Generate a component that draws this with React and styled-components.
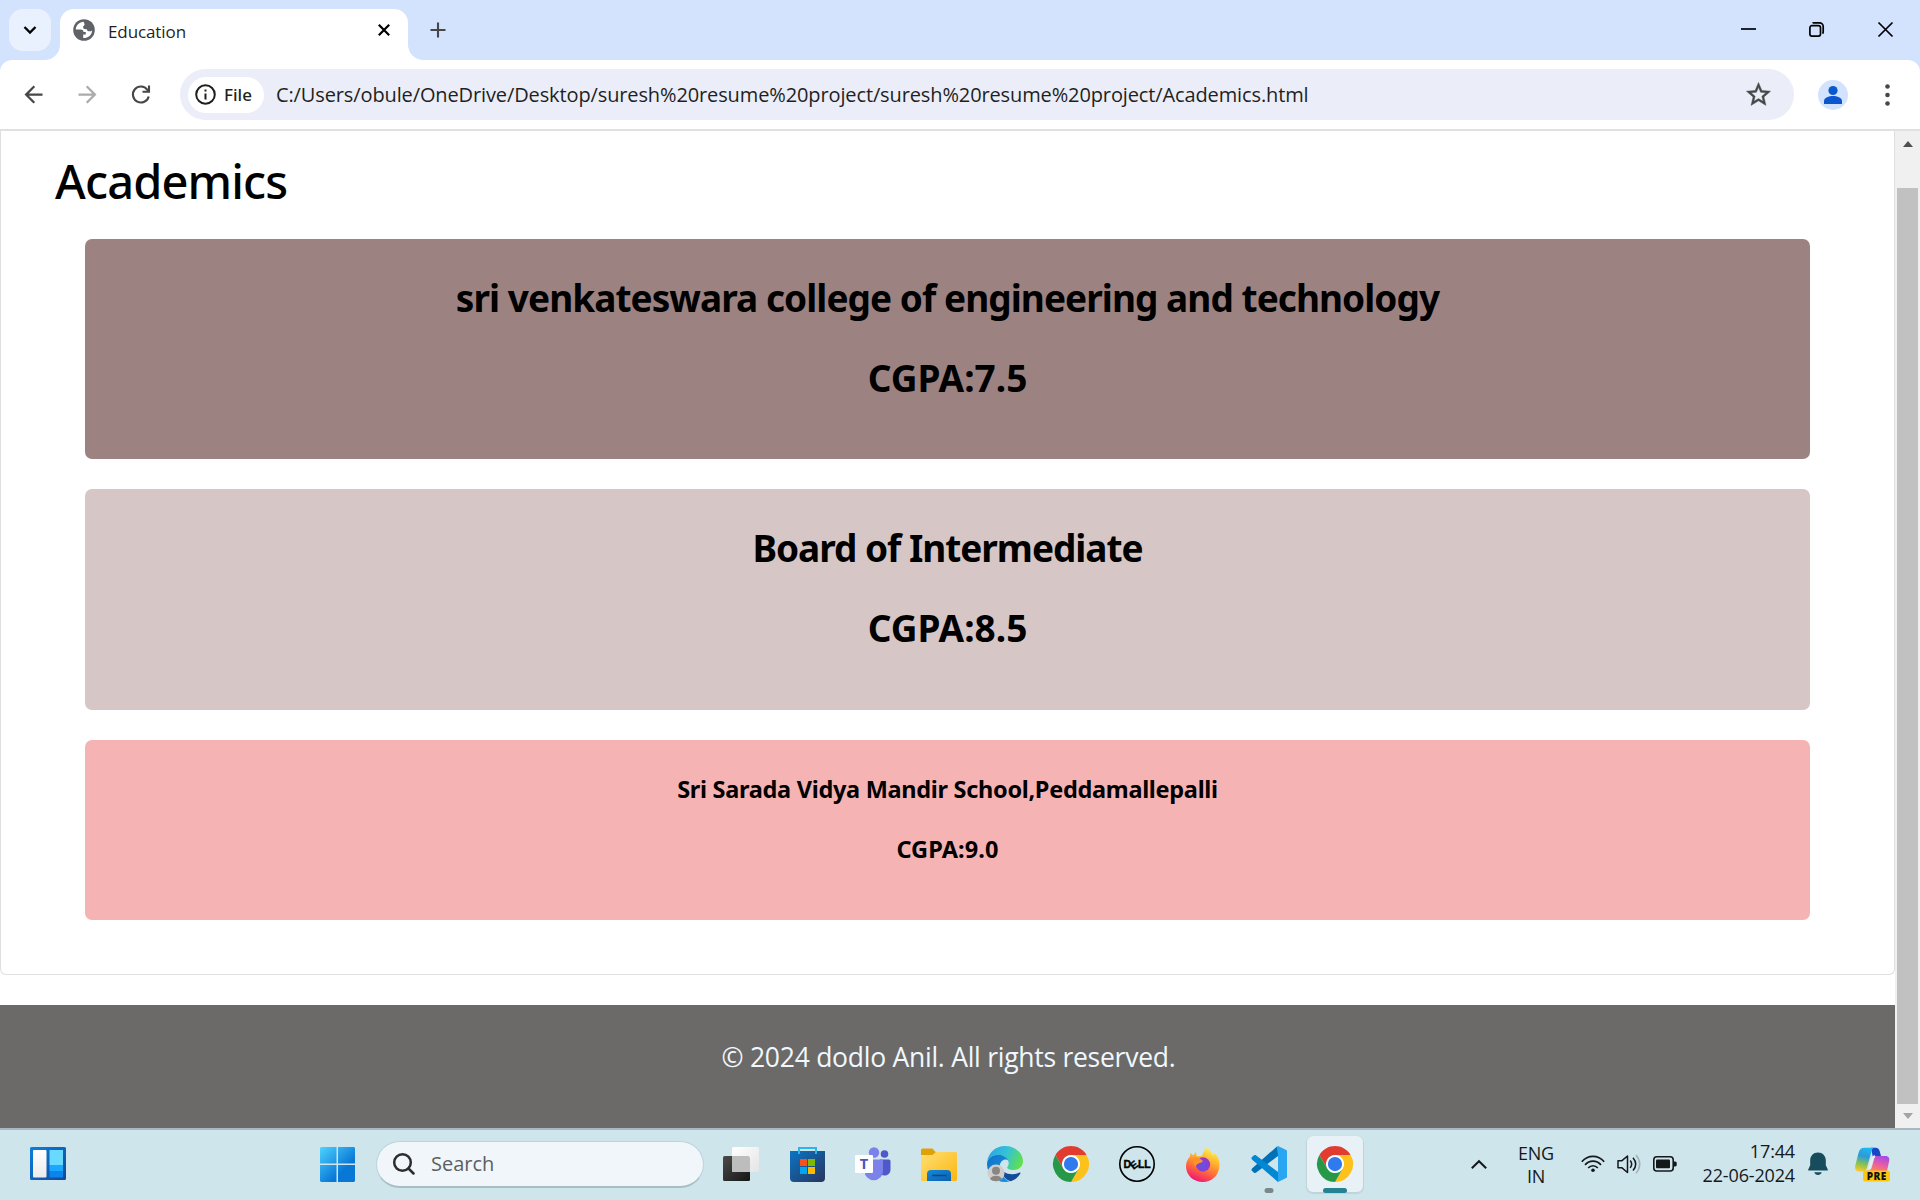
import React from 'react';
import styled, { createGlobalStyle } from 'styled-components';

const GlobalStyle = createGlobalStyle`
  * { box-sizing: border-box; }
  body { margin: 0; overflow: hidden; font-family: "Open Sans", "Noto Sans", sans-serif; color: #1f1f1f; }
  svg { display: block; flex: none; overflow: visible; }
`;

const Screen = styled.div`
  width: 1920px;
  height: 1200px;
  display: flex;
  flex-direction: column;
  background: #fff;
`;

/* ---------- browser chrome ---------- */

const TabStrip = styled.header`
  height: 60px;
  flex: none;
  display: flex;
  align-items: flex-start;
  padding: 9px 19px 0 9px;
  background: #d3e3fd;
`;

const TabSearch = styled.button`
  width: 42px;
  height: 42px;
  padding: 0;
  border: 0;
  border-radius: 14px;
  background: #e9f1fe;
  display: grid;
  place-items: center;
`;

const Tab = styled.div`
  position: relative;
  width: 348px;
  height: 51px;
  margin-left: 9px;
  padding: 0 14px 9px 13px;
  border-radius: 14px 14px 0 0;
  background: #fff;
  display: flex;
  align-items: center;

  &::before,
  &::after {
    content: '';
    position: absolute;
    bottom: 0;
    width: 15px;
    height: 15px;
  }
  &::before {
    left: -15px;
    background: radial-gradient(circle at 0 0, transparent 14.5px, #fff 15.2px);
  }
  &::after {
    right: -15px;
    background: radial-gradient(circle at 100% 0, transparent 14.5px, #fff 15.2px);
  }
`;

const TabTitle = styled.span`
  flex: 1;
  margin-left: 13px;
  padding-top: 3px;
  font-size: 17px;
  line-height: 24px;
  letter-spacing: -0.1px;
`;

const PlainButton = styled.button`
  width: ${(p) => p.$w || 42}px;
  height: 42px;
  padding: 0;
  border: 0;
  background: none;
  flex: none;
  display: grid;
  place-items: center;
`;

const NewTab = styled(PlainButton)`
  margin-left: 9px;
`;

const WindowControls = styled.div`
  display: flex;
  gap: 53px;
  margin-left: auto;
  margin-right: 8px;
  padding-top: 13px;

  svg:last-child {
    margin-left: 1px;
  }
`;

const ToolbarBack = styled.div`
  flex: none;
  background: #d3e3fd;
`;

const Toolbar = styled.div`
  height: 71px;
  border-radius: 12px 12px 0 0;
  border-bottom: 2px solid #dfe0e1;
  background: #fff;
  display: flex;
  align-items: center;
  padding: 0 3px 0 6px;
`;

const NavButton = styled(PlainButton)`
  width: 54px;
  color: ${(p) => (p.$off ? '#ababab' : '#474747')};
`;

const Omnibox = styled.div`
  width: 1614px;
  height: 51px;
  flex: none;
  margin-left: 12px;
  padding: 0 21px 0 8px;
  border-radius: 26px;
  background: #ebeef8;
  display: flex;
  align-items: center;
`;

const FileChip = styled.div`
  width: 76px;
  height: 36px;
  padding-left: 7px;
  border-radius: 18px;
  background: #fff;
  display: flex;
  align-items: center;
  gap: 8px;
  font: 500 17px/24px "Noto Sans", sans-serif;
`;

const Address = styled.span`
  flex: 1;
  margin-left: 12px;
  font-size: 20px;
  line-height: 28px;
  letter-spacing: -0.12px;
  white-space: nowrap;
`;

const Avatar = styled.div`
  width: 30px;
  height: 30px;
  flex: none;
  margin: 0 9px 0 24px;
  border-radius: 50%;
  background: #d3e3fd;
`;

/* ---------- page ---------- */

const Viewport = styled.div`
  height: 997px;
  flex: none;
  display: flex;
  overflow: hidden;
`;

const Page = styled.main`
  width: 1895px;
  color: #000;
`;

const Section = styled.section`
  height: 844px;
  padding: 20px 84px 0;
  border: solid #dedfe0;
  border-width: 0 1px 1px;
  border-radius: 0 0 6px 6px;
`;

const PageTitle = styled.h1`
  margin: 0 0 28px -30px;
  font: 500 47px/60px "Noto Sans", sans-serif;
  letter-spacing: -0.85px;
`;

const Card = styled.article`
  height: ${(p) => p.$height}px;
  margin-bottom: 30px;
  padding-top: 31px;
  border-radius: 7px;
  background: ${(p) => p.$color};
  text-align: center;
`;

const CardHeading = styled.h2`
  margin: 0 0 24px;
  font: 700 37px/56px "Noto Sans", sans-serif;
  letter-spacing: ${(p) => p.$tracking}px;
`;

const CardSubheading = styled.h4`
  margin: 0 0 24px;
  font: 700 23.5px/36px "Noto Sans", sans-serif;
  letter-spacing: ${(p) => p.$tracking}px;
`;

const Footer = styled.footer`
  height: 123px;
  margin-top: 30px;
  padding: 32px 0 0 2px;
  background: #6b6a68;
  color: #f0f8ff;
  text-align: center;
  font-size: 26.5px;
  line-height: 40px;
  letter-spacing: -0.26px;
`;

const Scrollbar = styled.div`
  width: 25px;
  padding: 10px 2px 9px;
  background: #f0f0f0;
  display: flex;
  flex-direction: column;
  align-items: center;
`;

const Thumb = styled.div`
  width: 21px;
  height: 916px;
  margin: 41px 0 9px;
  background: #c1c1c1;
`;

const Arrow = styled.div`
  border: 5.5px solid transparent;
  border-${(p) => (p.$up ? 'bottom' : 'top')}: 6px solid ${(p) => (p.$up ? '#505050' : '#a3a3a3')};
  border-${(p) => (p.$up ? 'top' : 'bottom')}: 0;
`;

/* ---------- taskbar ---------- */

const Taskbar = styled.footer`
  height: 72px;
  flex: none;
  padding: 0 30px;
  border-top: 2px solid #a9b8c0;
  background: #cfe5ec;
  display: flex;
  align-items: center;
`;

const StartArea = styled.div`
  width: 346px;
  display: flex;
  align-items: flex-start;
  justify-content: space-between;
  margin-bottom: 1px;
  padding-right: 21px;
`;

const SearchBox = styled.div`
  width: 328px;
  height: 47px;
  margin: 0 4px 1px 0;
  padding-left: 16px;
  border: 1px solid #bdd3db;
  border-bottom: 2px solid #a9bdc5;
  border-radius: 24px;
  background: #f0f6f9;
  display: flex;
  align-items: center;
  gap: 16px;
  font-size: 20px;
  line-height: 28px;
  color: #5c6062;
`;

const AppCell = styled.div`
  width: 66px;
  height: 68px;
  margin-bottom: 2px;
  display: grid;
  place-items: center;
`;

const AppTile = styled.div`
  position: relative;
  width: 56px;
  height: 56px;
  border-radius: 6px;
  display: grid;
  place-items: center;
  background: ${(p) => (p.$active ? '#e7f1f6' : 'none')};
  box-shadow: ${(p) => (p.$active ? '0 1px 1px 1px #bfd3da' : 'none')};
`;

const Indicator = styled.span`
  position: absolute;
  bottom: -1px;
  left: 50%;
  width: ${(p) => (p.$active ? 24 : 9)}px;
  height: 5px;
  border-radius: 3px;
  transform: translateX(-50%);
  background: ${(p) => (p.$active ? '#258291' : '#7c878b')};
`;

const Tray = styled.div`
  margin-left: auto;
  display: flex;
  align-items: center;
  color: #15181a;
`;

const Chevron = styled.div`
  margin-bottom: 2px;
`;

const Language = styled.div`
  width: 54px;
  margin: 0 0 1px 22px;
  font-size: 18px;
  line-height: 23px;
  letter-spacing: -0.2px;
  text-align: center;
`;

const Status = styled.div`
  display: flex;
  align-items: center;
  gap: 12px;
  margin: 0 0 2px ${(p) => p.$before || 18}px;
`;

const Clock = styled.div`
  width: 118px;
  margin-bottom: 4px;
  font-size: 18px;
  line-height: 24px;
  letter-spacing: -0.15px;
  text-align: right;
`;

/* ---------- icons ---------- */

const Stroke = ({ w, h, sw, children, color = 'currentColor', cap = 'butt' }) => (
  <svg width={w} height={h} viewBox={`0 0 ${w} ${h}`} fill="none" stroke={color} strokeWidth={sw} strokeLinecap={cap}>
    {children}
  </svg>
);

const GlobeIcon = () => (
  <svg width="22" height="22" viewBox="0 0 22 22">
    <circle cx="11" cy="11" r="10.8" fill="#5f6368" />
    <path d="M10.8 2.7C6 2.8 3.1 6.4 2.8 10.4h5.1c1.7 0 2.6 1 2.6 2.5h2.3v2.6h-2.6v3.6c5 .2 8.8-3.4 8.9-7.7-1 .9-2 1-3.6.8-1.3-.2-1.7-1-1.8-2.1-2 .2-3.5-.2-3.6-1.9-.1-1.6 1.6-1.6 1.5-3 0-.9-.8-1-.8-2.5z" fill="#fff" />
  </svg>
);

const ChromeIcon = () => (
  <svg width="36" height="36" viewBox="0 0 48 48">
    <circle cx="24" cy="24" r="12.5" fill="#fff" />
    <path d="M24 12h20.780a24 24 0 0 0-41.564.003L13.608 30l.009-.002A11.985 11.985 0 0 1 24 12z" fill="#e23c30" />
    <path d="M34.391 30.003 24 48A23.994 23.994 0 0 0 44.780 12.003H24l-.003.009a11.985 11.985 0 0 1 10.394 17.991z" fill="#fcc21b" />
    <path d="M13.609 30.003 3.218 12.006A23.994 23.994 0 0 0 24.002 48l10.391-17.997-.007-.007a11.985 11.985 0 0 1-20.777.007z" fill="#279847" />
    <circle cx="24" cy="24" r="9.5" fill="#2f7bed" />
  </svg>
);

const WidgetsIcon = () => (
  <svg width="36" height="33" viewBox="0 0 36 33">
    <defs>
      <linearGradient id="wBack" x1="0" y1="0" x2="1" y2="1"><stop stopColor="#0d7fdc" /><stop offset="1" stopColor="#11489a" /></linearGradient>
      <linearGradient id="wPane" x1="0" y1="0" x2="0" y2="1"><stop stopColor="#fff" /><stop offset="1" stopColor="#ebebeb" /></linearGradient>
    </defs>
    <rect width="36" height="33" rx="1.5" fill="url(#wBack)" />
    <rect x="3" y="3" width="13.5" height="27.5" rx="1" fill="url(#wPane)" />
    <path d="M19.5 3H33v15H19.500z" fill="#68d9ff" />
    <path d="M19.5 18H33v6H19.500z" fill="#1ca7ff" />
    <path d="M19.5 24H33v6.500H19.500z" fill="#0b84ec" />
  </svg>
);

const StartIcon = () => (
  <svg width="35" height="35" viewBox="0 0 35 35">
    <defs>
      <linearGradient id="start" gradientUnits="userSpaceOnUse" x1="0" y1="0" x2="30" y2="32"><stop stopColor="#4fd2ff" /><stop offset=".75" stopColor="#0878d6" /></linearGradient>
    </defs>
    <path d="M1 0h15.500v16.500H0V1zM18 0h16l1 1v15.500H18zM0 18h16.500v17H1l-1-1zM18 18h17v16l-1 1H18z" fill="url(#start)" />
  </svg>
);

const TaskViewIcon = () => (
  <svg width="36" height="34" viewBox="0 0 36 34">
    <defs>
      <linearGradient id="tvDark" x1="0" y1="0" x2="1" y2="1"><stop stopColor="#4b4b4b" /><stop offset="1" stopColor="#151515" /></linearGradient>
      <linearGradient id="tvLight" x1="0" y1="0" x2="1" y2="1"><stop stopColor="#fff" /><stop offset="1" stopColor="#e4e4e4" /></linearGradient>
    </defs>
    <rect y="9" width="27" height="25" rx="1.5" fill="url(#tvDark)" />
    <rect x="9" width="27" height="25" rx="1.5" fill="url(#tvLight)" />
    <path d="M9 9h16.500L27 10.500V25H10.500L9 23.500z" fill="#bdbdbd" />
  </svg>
);

const StoreIcon = () => (
  <svg width="35" height="35" viewBox="0 0 35 35">
    <defs>
      <linearGradient id="store" x1="0" y1="0" x2="1" y2="1"><stop stopColor="#0b74c6" /><stop offset="1" stopColor="#27355c" /></linearGradient>
    </defs>
    <path d="M0 4h35v27a4 4 0 0 1-4 4H4a4 4 0 0 1-4-4z" fill="url(#store)" />
    <path d="M9 7V1h17v6" fill="none" stroke="#27b7ee" strokeWidth="2" />
    <path d="M10 12h7v7h-7z" fill="#f4511f" />
    <path d="M18 12h7v7h-7z" fill="#80b900" />
    <path d="M10 20h7v7h-7z" fill="#05a4ee" />
    <path d="M18 20h7v7h-7z" fill="#fdb902" />
  </svg>
);

const TeamsIcon = () => (
  <svg width="36" height="34" viewBox="0 0 36 34">
    <circle cx="29.5" cy="7" r="3.8" fill="#5059c9" />
    <path d="M25 12.500h9a1.500 1.500 0 0 1 1.500 1.500v8.500a6 6 0 0 1-10.500 4z" fill="#5059c9" />
    <circle cx="19" cy="5.5" r="5.2" fill="#7b83eb" />
    <path d="M9.500 12.500h17a1.500 1.500 0 0 1 1.500 1.500v10a9.200 9.200 0 0 1-18.500 0z" fill="#7b83eb" />
    <rect y="8" width="18" height="18" rx="1" fill="#fff" />
    <text x="9" y="21.8" fontFamily="Open Sans" fontWeight="700" fontSize="14.5" textAnchor="middle" fill="#4b53bc">T</text>
  </svg>
);

const ExplorerIcon = () => (
  <svg width="36" height="33" viewBox="0 0 36 33">
    <defs>
      <linearGradient id="folder" x1="0" y1="0" x2="1" y2="1"><stop stopColor="#ffdf76" /><stop offset="1" stopColor="#fbb70e" /></linearGradient>
      <linearGradient id="folderBlue" x1="0" y1="0" x2="1" y2="1"><stop stopColor="#1589dc" /><stop offset="1" stopColor="#0c60ad" /></linearGradient>
    </defs>
    <path d="M0 1.500 1.500.5h10L14.500 4H20v6H0z" fill="#e0a106" />
    <path d="M0 7h11.500L15 4h20l1 1v27l-1 1H1l-1-1z" fill="url(#folder)" />
    <path d="M6 33v-7a4 4 0 0 1 4-4h16a4 4 0 0 1 4 4v7z" fill="url(#folderBlue)" />
    <path d="M11 27.500h14.500" stroke="#0b4a86" strokeWidth="1.5" />
  </svg>
);

const EdgeIcon = () => (
  <svg width="36" height="36" viewBox="0 0 36 36">
    <defs>
      <linearGradient id="eTop" x1="0" y1=".3" x2="1" y2=".6"><stop stopColor="#2aa5e6" /><stop offset=".5" stopColor="#33c3d6" /><stop offset="1" stopColor="#63e04a" /></linearGradient>
      <linearGradient id="eMid" x1="0" y1="0" x2="1" y2="1"><stop stopColor="#1174c9" /><stop offset="1" stopColor="#1993dd" /></linearGradient>
    </defs>
    <path d="M.2 16C1.200 6.500 8.800 0 18 0c10.500 0 18 7.300 18 15.300 0 5.200-4 8.700-9.300 8.700-4.200 0-6.500-1.300-6.500-2.500 0-.9 1.500-1.600 1.500-4.300C21.700 12.800 17 8.800 11.300 8.800 5.700 8.800 1.500 12 .2 16z" fill="url(#eTop)" />
    <path d="M0 18c0-5 5-9.200 11.300-9.200 4.500 0 8.600 2.500 9.900 5.600-1.200-.9-3-1.100-4.700-.4-3 1.300-4.200 4.500-3.800 8C13.400 28 17 33 22.500 35.400 20 36 18 36 18 36 8 36 0 28 0 18z" fill="url(#eMid)" />
    <path d="M13 19.500c-.6 7.500 5.500 14.500 10.500 15.700C28 33.700 31.700 30.700 33.500 27.300c.3-.8-.4-1.100-1-.8-8 4-18 1-19.500-7z" fill="#114d99" />
    <circle cx="9" cy="27" r="8.5" fill="#d1cdca" />
    <circle cx="9" cy="24.8" r="4" fill="#8a8683" />
    <path d="M3 33c1.500-4.500 10.500-4.500 12 0-3 3-9 3-12 0z" fill="#8a8683" />
  </svg>
);

const DellIcon = () => (
  <svg width="36" height="36" viewBox="0 0 36 36">
    <circle cx="18" cy="18" r="17.2" fill="none" stroke="#000" strokeWidth="1.6" />
    <g fontFamily="Liberation Sans" fontWeight="700" fontSize="10.5" stroke="#000" strokeWidth=".4">
      <text x="4.6" y="21.8">D</text>
      <text x="11.4" y="22.6" transform="rotate(-38 14.9 18.8)">E</text>
      <text x="19" y="21.8">L</text>
      <text x="25.2" y="21.8">L</text>
    </g>
  </svg>
);

const FirefoxIcon = () => (
  <svg width="34" height="35" viewBox="0 0 34 35">
    <defs>
      <linearGradient id="ff" x1=".75" y1=".05" x2=".35" y2="1"><stop stopColor="#fff04a" /><stop offset=".35" stopColor="#ffb02e" /><stop offset=".65" stopColor="#ff6a3a" /><stop offset="1" stopColor="#ee1579" /></linearGradient>
      <radialGradient id="ffCore" cx=".45" cy=".6" r=".6"><stop stopColor="#6155e0" /><stop offset="1" stopColor="#9a35cf" /></radialGradient>
    </defs>
    <path d="M22 0c.5 3.600 3.500 5 5.500 9 .7-.8.7-2.500.5-3.500 4.300 3.500 5.600 8.500 5.500 13C33.300 28 26 35 17 35 7.500 35 .2 28.500 0 19.500c0-5 2-8 4-10l.5-3.500 2.700 2.400L10 4.800l.5 4.500L16 9c1-4.500 4-8 6-9z" fill="url(#ff)" />
    <circle cx="17" cy="17.5" r="7.2" fill="url(#ffCore)" />
    <path d="M8.500 10.500c3-1 5 .5 8.500 3.500-1 1.700-3.300 1.900-4.500 2.400-1.800.8-2.900 2-2.700 3.600C7 16.500 6.500 13 8.500 10.500z" fill="#ff942b" />
  </svg>
);

const VsCodeIcon = () => (
  <svg width="36" height="36" viewBox="0 0 36 36">
    <path d="M26.500 0 1.300 22.300c-1 .9-1 1.900-.2 2.700l1.600 1.500c.9.7 1.700.7 2.500.1L27 10z" fill="#0070b7" />
    <path d="M1.200 13.700c-1-.9-1-1.900-.2-2.700l1.700-1.500c.8-.7 1.700-.7 2.500-.1L27 26v10z" fill="#0288d2" />
    <path d="m27 0 8.200 3.900c.5.3.8.7.8 1.300v25.600c0 .6-.3 1-.8 1.300L27 36z" fill="#29a6f1" />
  </svg>
);

const WifiIcon = () => (
  <Stroke w={24} h={18} sw={1.7}>
    <path d="M.8 6.700C7-.4 17-.4 23.200 6.700M4 9.900c4.500-5 11.500-5 16 0M7.200 13c2.700-3 6.900-3 9.600 0" />
    <circle cx="12" cy="15.3" r="1.8" fill="currentColor" stroke="none" />
  </Stroke>
);

const SpeakerIcon = () => (
  <Stroke w={24} h={20} sw={1.5}>
    <path d="M1 6.800h3.700L10.500 2v16.500l-5.800-4.800H1z" strokeLinejoin="round" />
    <path d="M13.200 6.500q3 3.700 0 7.400M16 3.800q5.500 6.400 0 12.800" />
    <path d="M19 1q7.500 9.200 0 18.400" opacity=".25" />
  </Stroke>
);

const BatteryIcon = () => (
  <Stroke w={24} h={16} sw={1.6}>
    <rect x=".8" y=".8" width="19.4" height="14.2" rx="3" />
    <rect x="3" y="3.5" width="14" height="8.8" rx="1" fill="currentColor" stroke="none" />
    <path d="M20 5.500h2.500l1.200 1v3l-1.200 1H20z" fill="currentColor" stroke="none" />
  </Stroke>
);

const BellIcon = () => (
  <svg width="20" height="24" viewBox="0 0 20 24">
    <path d="M10 .5c-4.600 0-7.800 3.500-7.800 7.800v5L.2 17.400c-.2.7.1 1.200.8 1.200h18c.7 0 1-.5.8-1.200l-2-4.100v-5C17.800 4 14.600.5 10 .5z" fill="#164c5b" />
    <path d="M6.300 20.200h7.400c-.8 3.600-6.600 3.600-7.400 0z" fill="#164c5b" />
  </svg>
);

const CopilotIcon = () => (
  <svg width="35" height="35" viewBox="0 0 35 35">
    <defs>
      <linearGradient id="cpL" x1=".5" y1="0" x2=".3" y2="1"><stop stopColor="#22b5ee" /><stop offset=".35" stopColor="#2b9bd8" /><stop offset=".7" stopColor="#8bc34f" /><stop offset="1" stopColor="#ffc928" /></linearGradient>
      <linearGradient id="cpR" x1=".8" y1="0" x2=".3" y2="1"><stop stopColor="#a04be8" /><stop offset=".5" stopColor="#e75ba8" /><stop offset="1" stopColor="#ff8b50" /></linearGradient>
    </defs>
    <path d="M16 .8h4.500c2.500 0 3.600 1.500 4.200 3.400L26 9h-4c-2 0-3.200 1-3.800 3z" fill="#1747c8" />
    <path d="M20 9h10.500c3 0 4.200 2.200 3.700 4.700L32 24H8l6-.5c1.500-.5 2.500-2 3-4z" fill="url(#cpR)" />
    <path d="M9.500.8h9.700c-1.400.4-2 1.300-2.500 2.900L12 20.500c-.8 2.800-2 4-4.500 4H4C.8 24.500-.4 22 .2 19L3.500 6C4.400 2.500 6 .8 9.500.8z" fill="url(#cpL)" />
    <path d="M20 9.200c-1.500.3-2.300 1.300-2.800 3L14.500 22" fill="none" stroke="#e6eef4" strokeWidth="2.2" />
    <rect x="8" y="23.5" width="27" height="11" rx="2.5" fill="#fdc60f" />
    <text x="21.8" y="32.6" fontFamily="Open Sans" fontWeight="800" fontSize="10" letterSpacing=".5" textAnchor="middle" fill="#111">PRE</text>
  </svg>
);

const apps = [
  { icon: TaskViewIcon },
  { icon: StoreIcon },
  { icon: TeamsIcon },
  { icon: ExplorerIcon },
  { icon: EdgeIcon },
  { icon: ChromeIcon },
  { icon: DellIcon },
  { icon: FirefoxIcon },
  { icon: VsCodeIcon, running: true },
  { icon: ChromeIcon, running: true, active: true },
];

export default function App() {
  return (
    <Screen>
      <GlobalStyle />
      <TabStrip>
        <TabSearch>
          <Stroke w={14} h={8} sw={2.3}><path d="m1.500 1 5.500 5.500L12.500 1" /></Stroke>
        </TabSearch>
        <Tab>
          <GlobeIcon />
          <TabTitle>Education</TabTitle>
          <PlainButton $w={20}>
            <Stroke w={12} h={12} sw={2.2}><path d="m.8.8 10.400 10.400M11.200.8.8 11.200" /></Stroke>
          </PlainButton>
        </Tab>
        <NewTab>
          <Stroke w={16} h={16} sw={2.1} color="#474747"><path d="M8 .5v15M.5 8h15" /></Stroke>
        </NewTab>
        <WindowControls>
          <Stroke w={15} h={15} sw={1.7} color="#000"><path d="M0 7h15" /></Stroke>
          <Stroke w={15} h={15} sw={1.7} color="#000">
            <rect x=".9" y="3.7" width="10.6" height="10.4" rx="2" />
            <path d="M3.500 1.200Q4 .8 5 .8h5.500a3.700 3.700 0 0 1 3.700 3.700V10q0 1-.7 1.700" />
          </Stroke>
          <Stroke w={15} h={15} sw={1.7} color="#000"><path d="m.5.5 14 14M14.500.5l-14 14" /></Stroke>
        </WindowControls>
      </TabStrip>

      <ToolbarBack>
        <Toolbar>
          <NavButton>
            <svg width="27" height="27" viewBox="0 0 24 24" fill="currentColor"><path d="M20 11H7.830l5.590-5.590L12 4l-8 8 8 8 1.410-1.410L7.830 13H20v-2z" /></svg>
          </NavButton>
          <NavButton $off>
            <svg width="27" height="27" viewBox="0 0 24 24" fill="currentColor"><path d="M4 13h12.170l-5.590 5.590L12 20l8-8-8-8-1.410 1.410L16.170 11H4v2z" /></svg>
          </NavButton>
          <NavButton>
            <Stroke w={18} h={19} sw={2.1}>
              <path d="M16.700 11.400A8 8 0 1 1 15.400 4.800L17 6.600" />
              <path d="M17 .5v6.300h-6.500" />
            </Stroke>
          </NavButton>
          <Omnibox>
            <FileChip>
              <Stroke w={21} h={21} sw={2}>
                <circle cx="10.5" cy="10.5" r="9.3" />
                <path d="M10.500 9.500v6M10.500 5.500v2" />
              </Stroke>
              File
            </FileChip>
            <Address>C:/Users/obule/OneDrive/Desktop/suresh%20resume%20project/suresh%20resume%20project/Academics.html</Address>
            <svg width="29" height="29" viewBox="0 0 24 24" fill="#474747" stroke="#474747" strokeWidth=".35"><path d="M22 9.240l-7.190-.620L12 2 9.190 8.630 2 9.240l5.460 4.730L5.820 21 12 17.270 18.180 21l-1.630-7.030L22 9.240zM12 15.400l-3.760 2.270 1-4.280-3.320-2.880 4.380-.380L12 6.100l1.710 4.040 4.380.380-3.320 2.880 1 4.280L12 15.400z" /></svg>
          </Omnibox>
          <Avatar>
            <svg width="30" height="30" viewBox="0 0 30 30" fill="#0b57d0">
              <circle cx="15" cy="10.5" r="4.6" />
              <path d="M6 24v-3c0-3.500 5-5 9-5s9 1.500 9 5v3z" />
            </svg>
          </Avatar>
          <PlainButton $w={60}>
            <svg width="5" height="22" viewBox="0 0 5 22" fill="#474747">
              <circle cx="2.5" cy="2.5" r="2.3" /><circle cx="2.5" cy="11" r="2.3" /><circle cx="2.5" cy="19.5" r="2.3" />
            </svg>
          </PlainButton>
        </Toolbar>
      </ToolbarBack>

      <Viewport>
        <Page>
          <Section>
            <PageTitle>Academics</PageTitle>
            <Card $color="#9c8382" $height={220}>
              <CardHeading $tracking={-0.95}>sri venkateswara college of engineering and technology</CardHeading>
              <CardHeading $tracking={0}>CGPA:7.5</CardHeading>
            </Card>
            <Card $color="#d7c6c6" $height={221}>
              <CardHeading $tracking={-1.03}>Board of Intermediate</CardHeading>
              <CardHeading $tracking={0}>CGPA:8.5</CardHeading>
            </Card>
            <Card $color="#f6b3b4" $height={180}>
              <CardSubheading $tracking={-0.3}>Sri Sarada Vidya Mandir School,Peddamallepalli</CardSubheading>
              <CardSubheading $tracking={0.1}>CGPA:9.0</CardSubheading>
            </Card>
          </Section>
          <Footer>© 2024 dodlo Anil. All rights reserved.</Footer>
        </Page>
        <Scrollbar>
          <Arrow $up />
          <Thumb />
          <Arrow />
        </Scrollbar>
      </Viewport>

      <Taskbar>
        <StartArea>
          <WidgetsIcon />
          <StartIcon />
        </StartArea>
        <SearchBox>
          <Stroke w={22} h={22} sw={2.5} color="#2a2c2d" cap="round">
            <circle cx="9.5" cy="9.5" r="8.3" /><path d="m15.500 15.500 5 5" />
          </Stroke>
          Search
        </SearchBox>
        {apps.map(({ icon: Icon, running, active }, i) => (
          <AppCell key={i}>
            <AppTile $active={active}>
              <Icon />
              {running && <Indicator $active={active} />}
            </AppTile>
          </AppCell>
        ))}
        <Tray>
          <Chevron>
            <Stroke w={16} h={9} sw={2}><path d="m.8 8.200 7.200-7 7.200 7" /></Stroke>
          </Chevron>
          <Language>ENG<br />IN</Language>
          <Status>
            <WifiIcon />
            <SpeakerIcon />
            <BatteryIcon />
          </Status>
          <Clock>17:44<br />22-06-2024</Clock>
          <Status $before={13}>
            <BellIcon />
          </Status>
          <Status $before={27}>
            <CopilotIcon />
          </Status>
        </Tray>
      </Taskbar>
    </Screen>
  );
}
